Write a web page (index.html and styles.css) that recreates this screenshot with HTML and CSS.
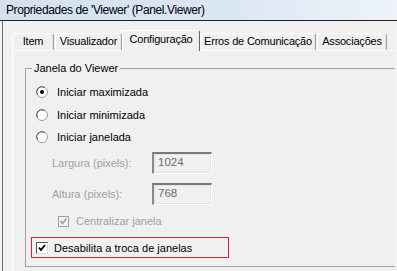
FILE: index.html
```html
<!DOCTYPE html>
<html lang="pt">

<head>
    <meta charset="UTF-8">
    <title>Propriedades de 'Viewer' (Panel.Viewer)</title>
    <link rel="stylesheet" href="styles.css">
</head>

<body>
    <div class="titlebar">Propriedades de 'Viewer' (Panel.Viewer)</div>

    <div class="dialog">
        <div class="tabs">
            <div class="tab tab-item">Item</div>
            <div class="tab tab-visual">Visualizador</div>
            <div class="tab tab-config active">Configuração</div>
            <div class="tab tab-erros">Erros de Comunicação</div>
            <div class="tab tab-assoc">Associações</div>
        </div>

        <div class="panel">
            <fieldset class="group">
                <legend>Janela do Viewer</legend>

                <div class="option">
                    <svg class="radio" width="12" height="12" viewBox="0 0 12 12">
                        <circle cx="6" cy="6" r="5.5" fill="#fff" stroke="#9a9a9a" />
                        <path d="M1.6 8.5 A5 5 0 0 1 8.5 1.6" fill="none" stroke="#555" />
                        <circle cx="6" cy="6" r="2" fill="#000" />
                    </svg>
                    <span>Iniciar maximizada</span>
                </div>
                <div class="option second">
                    <svg class="radio" width="12" height="12" viewBox="0 0 12 12">
                        <circle cx="6" cy="6" r="5.5" fill="#fff" stroke="#9a9a9a" />
                        <path d="M1.6 8.5 A5 5 0 0 1 8.5 1.6" fill="none" stroke="#555" />
                    </svg>
                    <span>Iniciar minimizada</span>
                </div>
                <div class="option">
                    <svg class="radio" width="12" height="12" viewBox="0 0 12 12">
                        <circle cx="6" cy="6" r="5.5" fill="#fff" stroke="#9a9a9a" />
                        <path d="M1.6 8.5 A5 5 0 0 1 8.5 1.6" fill="none" stroke="#555" />
                    </svg>
                    <span>Iniciar janelada</span>
                </div>

                <div class="field first">
                    <span class="label">Largura (pixels):</span>
                    <span class="textbox">1024</span>
                </div>
                <div class="field">
                    <span class="label">Altura (pixels):</span>
                    <span class="textbox">768</span>
                </div>

                <div class="check-row disabled">
                    <svg class="check" width="11" height="11" viewBox="0 0 11 11">
                        <rect x="0.5" y="0.5" width="10" height="10" fill="#f0f0f0" stroke="#a0a0a0" />
                        <path d="M2.5 5 L4.5 7.5 L8.5 2.5" fill="none" stroke="#a0a0a0" stroke-width="1.6" />
                    </svg>
                    <span>Centralizar janela</span>
                </div>

                <div class="highlight">
                    <svg class="check" width="12" height="12" viewBox="0 0 12 12">
                        <rect x="0.5" y="0.5" width="11" height="11" fill="#fff" stroke="#dcdcdc" />
                        <path d="M0.5 11.5 V0.5 H11.5" fill="none" stroke="#505050" />
                        <path d="M3 5.5 L5 8 L9 3" fill="none" stroke="#000" stroke-width="1.8" />
                    </svg>
                    <span>Desabilita a troca de janelas</span>
                </div>
            </fieldset>
        </div>
    </div>
</body>

</html>
```

FILE: styles.css
```css
body {
    margin: 0;
    width: 397px;
    height: 271px;
    overflow: hidden;
    background-color: #f4f4f4;
    font-family: "Liberation Sans", Arial, sans-serif;
    font-size: 11px;
    color: #000;
}

.titlebar {
    height: 20px;
    line-height: 20px;
    padding-left: 6px;
    font-size: 12px;
    letter-spacing: -0.4px;
    background: linear-gradient(to right, #d3e1ef, #dae6f3 55%, #eef3f9);
    border-bottom: 1px solid #202020;
}

.dialog {
    margin-left: 2px;
    width: 392px;
    height: 238px;
    overflow: hidden;
    border-left: 1px solid #6a6a6a;
    background-color: #f0f0f0;
    padding-top: 12px;
}

/* tab strip */
.tabs {
    display: flex;
    height: 17px;
    padding-left: 9px;
    align-items: flex-end;
}

.tab {
    box-sizing: border-box;
    height: 17px;
    line-height: 15px;
    text-align: center;
    letter-spacing: -0.2px;
    background-color: #f0f0f0;
    border-top: 1px solid #fff;
    border-left: 1px solid #fff;
    border-right: 1px solid #a0a0a0;
    border-radius: 2px 2px 0 0;
    box-shadow: inset -1px 0 0 #e3e3e3;
}

.tab-item {
    width: 42px;
}

.tab-visual {
    width: 67px;
    margin-left: 1px;
}

.tab-config {
    width: 78px;
}

.tab-erros {
    width: 116px;
}

.tab-assoc {
    width: 70px;
    margin-left: 1px;
}

.tab.active {
    height: 21px;
    line-height: 17px;
    margin-bottom: -1px;
    position: relative;
    background-color: #f0f0f0;
    border-right: 1px solid #696969;
}

.panel {
    margin-left: 9px;
    height: 230px;
    border-top: 1px solid #fff;
    border-left: 1px solid #fff;
    padding: 11px 0 0 12px;
}

/* group box */
.group {
    width: 364px;
    margin: 0;
    padding: 6px 0 8px 5px;
    border: 1px solid #a0a0a0;
    box-sizing: content-box;
    min-width: 0;
}

.group legend {
    margin-left: 1px;
    padding: 0 2px;
    line-height: 13px;
}

.option {
    display: flex;
    align-items: center;
    height: 22px;
    padding-left: 5px;
}

.option.second {
    margin-top: 1px;
}

.radio {
    margin-right: 9px;
}

.field {
    display: flex;
    align-items: center;
    height: 21px;
    margin-top: 10px;
    padding-left: 21px;
    color: #a0a0a0;
}

.field.first {
    margin-top: 4px;
}

.label {
    width: 100px;
}

.textbox {
    box-sizing: border-box;
    width: 60px;
    height: 22px;
    line-height: 17px;
    padding-left: 4px;
    color: #6d6d6d;
    font-size: 11.5px;
    border-top: 2px solid #7a7a7a;
    border-left: 2px solid #8a8a8a;
    border-right: 1px solid #fff;
    border-bottom: 1px solid #fff;
    box-shadow: inset 0 0 0 1px #e4e4e4;
}

.check-row {
    display: flex;
    align-items: center;
    height: 20px;
    margin-top: 7px;
    padding-left: 27px;
}

.check-row .check {
    margin-right: 7px;
}

.disabled {
    color: #a0a0a0;
}

.highlight {
    display: flex;
    align-items: center;
    box-sizing: border-box;
    width: 198px;
    height: 21px;
    margin-top: 6px;
    padding-left: 4px;
    border: 1px solid #ee1c24;
}

.highlight .check {
    margin-right: 6px;
}
```
